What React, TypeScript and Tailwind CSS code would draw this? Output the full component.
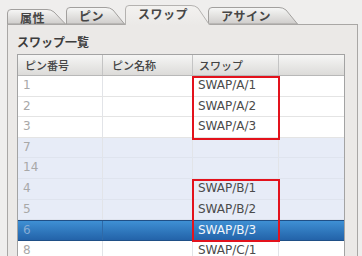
import React from 'react';

type Row = { pin: string; swap: string; tone: 'white' | 'blue' | 'selected' };

const rows: Row[] = [
  { pin: '1', swap: 'SWAP/A/1', tone: 'white' },
  { pin: '2', swap: 'SWAP/A/2', tone: 'white' },
  { pin: '3', swap: 'SWAP/A/3', tone: 'white' },
  { pin: '7', swap: '', tone: 'blue' },
  { pin: '14', swap: '', tone: 'blue' },
  { pin: '4', swap: 'SWAP/B/1', tone: 'blue' },
  { pin: '5', swap: 'SWAP/B/2', tone: 'blue' },
  { pin: '6', swap: 'SWAP/B/3', tone: 'selected' },
  { pin: '8', swap: 'SWAP/C/1', tone: 'white' },
];

const jp = { fontFamily: '"Noto Sans CJK JP", sans-serif' };

// tab outline: vertical left side, rounded top, sloped right side
function Tab({ label, width, height, active, id }: { label: string; width: number; height: number; active?: boolean; id: string }) {
  const w = width;
  const h = height;
  const s = 15;
  const d = `M0.5,${h} L0.5,4 Q0.5,0.5 4,0.5 L${w - s - 4},0.5 Q${w - s},0.5 ${w - s + 3},3 L${w - 0.5},${h}`;
  return (
    <div className="relative shrink-0" style={{ width: w, height: h }}>
      <svg className="absolute inset-0" width={w} height={h}>
        <defs>
          <linearGradient id={id} x1="0" y1="0" x2="0" y2="1">
            <stop offset="0" stopColor={active ? '#f3f2f0' : '#f7f7f6'} />
            <stop offset="1" stopColor={active ? '#ebe9e7' : '#cfcdcb'} />
          </linearGradient>
        </defs>
        <path d={d + (active ? '' : ' Z')} fill={`url(#${id})`} stroke={active ? '#b4b2b0' : '#a2a09e'} strokeWidth="1" />
      </svg>
      <span
        className="relative block pl-[13px] pt-[1px] text-[12px] font-bold leading-[15px] text-[#464646] tracking-[0.5px]"
        style={jp}
      >
        {label}
      </span>
    </div>
  );
}

export default function App() {
  return (
    <div className="h-[256px] w-[362px] overflow-hidden bg-[#efeeed]">
      {/* tab strip */}
      <div className="flex items-end pl-[7px] pt-[5px]">
        <Tab id="t1" label="属性" width={59} height={15} />
        <Tab id="t2" label="ピン" width={59} height={17} />
        <div className="relative z-10 -mb-px">
          <Tab id="t3" label="スワップ" width={85} height={20} active />
        </div>
        <div className="-ml-[2px]">
          <Tab id="t4" label="アサイン" width={90} height={17} />
        </div>
      </div>

      {/* panel */}
      <div className="ml-[7px] w-[351px] h-[240px] border border-[#a9a7a5] bg-[#ebe9e7] pl-[9px] pr-[12px]">
        <div className="pt-[10px] h-[29px] text-[12px] font-bold leading-[14px] text-[#3c3c3c]" style={jp}>
          スワップ一覧
        </div>

        <div className="relative border border-[#a3a3a3] bg-white">
          {/* header */}
          <div
            className="grid grid-cols-[85px_90px_86px_1fr] h-[21px] border-b border-[#b8b8b8] bg-gradient-to-b from-[#f6f6f5] to-[#dcdbd9] text-[11px] font-medium leading-[20px] text-[#444]"
            style={jp}
          >
            <div className="pl-[7px] border-r border-[#c4c4c4]">ピン番号</div>
            <div className="pl-[9px] border-r border-[#c4c4c4]">ピン名称</div>
            <div className="pl-[6px] border-r border-[#c4c4c4]">スワップ</div>
            <div />
          </div>

          {/* rows */}
          {rows.map((r) => {
            const bg =
              r.tone === 'selected'
                ? 'bg-gradient-to-b from-[#3f90d4] to-[#2363a9] border-y border-[#1f4f86]'
                : r.tone === 'blue'
                ? 'bg-[#e7ecf7] border-b border-[#dfe4ee]'
                : 'bg-white border-b border-[#e4e4e4]';
            const line = r.tone === 'selected' ? 'border-[#2f6aa8]' : 'border-[#e2e4e8]';
            return (
              <div
                key={r.pin}
                className={`grid grid-cols-[85px_90px_86px_1fr] h-[20.6px] text-[12px] leading-[19px] ${bg}`}
                style={{ fontFamily: '"DejaVu Sans", sans-serif' }}
              >
                <div className={`pl-[5px] border-r ${line} ${r.tone === 'selected' ? 'text-[#86acd4]' : 'text-[#a8a8a8]'}`}>
                  {r.pin}
                </div>
                <div className={`border-r ${line}`} />
                <div className={`pl-[5px] border-r ${line} ${r.tone === 'selected' ? 'text-[#f2f6fb]' : 'text-[#4b4b4b]'}`}>
                  {r.swap}
                </div>
                <div />
              </div>
            );
          })}

          {/* highlight boxes */}
          <div className="absolute left-[174px] top-[21px] w-[88px] h-[64px] border-2 border-[#e3121c]" />
          <div className="absolute left-[174px] top-[124px] w-[88px] h-[63px] border-2 border-[#e3121c]" />
        </div>
      </div>
    </div>
  );
}
